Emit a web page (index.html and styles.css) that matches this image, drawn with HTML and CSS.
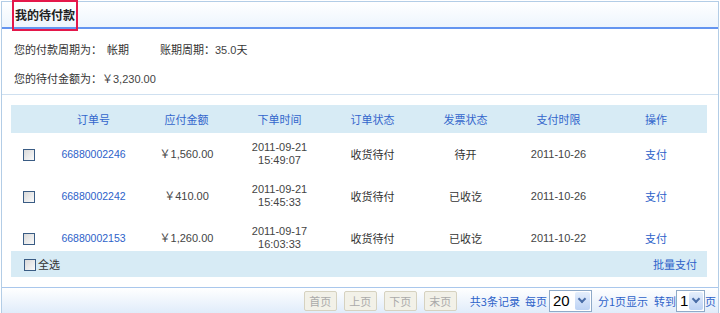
FILE: index.html
```html
<!DOCTYPE html>
<html lang="zh-CN">
<head>
    <meta charset="UTF-8">
    <meta name="viewport" content="width=device-width, initial-scale=1.0">
    <title>我的待付款</title>
    <link rel="stylesheet" href="styles.css">
</head>
<body>

<div class="panel">
    <div class="panel-head">
        <h2 class="panel-title">我的待付款</h2>
        <span class="mark"></span>
    </div>

    <div class="summary">
        <p>您的付款周期为：<span class="val">帐期</span><span class="term">账期周期：<span class="num">35.0</span>天</span></p>
        <p>您的待付金额为：<span class="num">￥3,230.00</span></p>
    </div>

    <div class="orders">
        <table class="order-table">
            <colgroup>
                <col class="c-check">
                <col><col><col><col><col><col>
                <col class="c-op">
            </colgroup>
            <thead>
                <tr>
                    <th></th>
                    <th>订单号</th>
                    <th>应付金额</th>
                    <th>下单时间</th>
                    <th>订单状态</th>
                    <th>发票状态</th>
                    <th>支付时限</th>
                    <th>操作</th>
                </tr>
            </thead>
            <tbody>
                <tr>
                    <td><span class="check"></span></td>
                    <td><a class="order-no" href="#">66880002246</a></td>
                    <td class="num">￥1,560.00</td>
                    <td class="num date">2011-09-21<br>15:49:07</td>
                    <td>收货待付</td>
                    <td>待开</td>
                    <td class="num">2011-10-26</td>
                    <td><a href="#">支付</a></td>
                </tr>
                <tr>
                    <td><span class="check"></span></td>
                    <td><a class="order-no" href="#">66880002242</a></td>
                    <td class="num">￥410.00</td>
                    <td class="num date">2011-09-21<br>15:45:33</td>
                    <td>收货待付</td>
                    <td>已收讫</td>
                    <td class="num">2011-10-26</td>
                    <td><a href="#">支付</a></td>
                </tr>
                <tr>
                    <td><span class="check"></span></td>
                    <td><a class="order-no" href="#">66880002153</a></td>
                    <td class="num">￥1,260.00</td>
                    <td class="num date">2011-09-17<br>16:03:33</td>
                    <td>收货待付</td>
                    <td>已收讫</td>
                    <td class="num">2011-10-22</td>
                    <td><a href="#">支付</a></td>
                </tr>
            </tbody>
            <tfoot>
                <tr>
                    <td colspan="8">
                        <div class="foot-bar">
                            <label class="all"><span class="check"></span>全选</label>
                            <a href="#">批量支付</a>
                        </div>
                    </td>
                </tr>
            </tfoot>
        </table>
    </div>

    <div class="pager">
        <span class="btn">首页</span>
        <span class="btn">上页</span>
        <span class="btn">下页</span>
        <span class="btn">末页</span>
        <span class="pg-text total">共3条记录</span>
        <span class="pg-text per">每页</span>
        <span class="sel sel-size"><span class="sel-val">20</span><span class="sel-arrow"></span></span>
        <span class="pg-text gap">分1页显示</span>
        <span class="pg-text gap">转到</span>
        <span class="sel sel-page"><span class="sel-val">1</span><span class="sel-arrow"></span></span>
        <span class="pg-text">页</span>
    </div>
</div>

</body>
</html>
```

FILE: styles.css
```css
body {
    margin: 0;
    background: #fff;
    color: #333;
    font-family: "Noto Sans CJK SC", sans-serif;
    font-size: 11px;
}
a {
    color: #2d62c9;
    text-decoration: none;
}

.panel {
    position: relative;
    margin: 1px 1px 0 1px;
    border: 1px solid #b3cde6;
    border-bottom-color: #a9c5e6;
}

/* title bar */
.panel-head {
    height: 25px;
    padding-left: 13px;
    background: linear-gradient(#ffffff, #edf5fd);
    border-bottom: 2px solid #6495f0;
}
.panel-title {
    margin: 0;
    font-size: 12px;
    font-weight: bold;
    line-height: 25px;
    color: #222;
}
.mark {
    position: absolute;
    left: 10px;
    top: -2px;
    width: 62px;
    height: 27px;
    border: 2px solid #e4174a;
}

/* summary */
.summary {
    padding: 6px 12px 1px;
    border-bottom: 1px solid #cfe0f0;
}
.summary p {
    margin: 0;
    line-height: 28px;
}
.summary .val {
    margin-left: 5px;
}
.summary .term {
    margin-left: 31px;
}
.num {
    font-family: "Liberation Sans", "Noto Sans CJK SC", sans-serif;
    color: #444;
}

/* orders table */
.orders {
    padding: 10px 10px 10px 9px;
}
.order-table {
    width: 696px;
    border-collapse: collapse;
    table-layout: fixed;
}
.c-check { width: 36px; }
.c-op { width: 102px; }
.order-table th {
    height: 28px;
    padding: 0;
    background: #d7ebf5;
    color: #3366cc;
    font-weight: normal;
    text-align: center;
}
.order-table tbody td {
    padding: 8px 0;
    text-align: center;
    vertical-align: middle;
    line-height: 13px;
    height: 26px;
}
.order-table tbody tr:last-child td {
    padding-bottom: 0;
}
.order-no {
    font-family: "Liberation Sans", sans-serif;
    font-size: 10.5px;
}
.check {
    display: inline-block;
    width: 10px;
    height: 10px;
    border: 1px solid #3a5c84;
    background: linear-gradient(135deg, #d9d9d9, #fafafa);
    vertical-align: middle;
}
.order-table tfoot td {
    height: 26px;
    padding: 0 10px 0 13px;
    background: #d7ebf5;
}
.foot-bar {
    display: flex;
    justify-content: space-between;
    align-items: center;
}
.all {
    display: flex;
    align-items: center;
    gap: 2px;
    color: #333;
}
.all .check {
    margin-top: 1px;
}

/* pager */
.pager {
    display: flex;
    justify-content: flex-end;
    align-items: center;
    height: 25px;
    padding-right: 2px;
    border-top: 1px solid #a9c7ec;
    background: linear-gradient(#ffffff, #e0ecfa);
    color: #2d62c9;
}
.btn {
    width: 31px;
    height: 18px;
    margin-left: 7px;
    line-height: 18px;
    text-align: center;
    border: 1px solid #d6d2c0;
    border-radius: 2px;
    background: #f2f1e8;
    color: #aaa;
}
.total {
    margin-left: 13px;
}
.per {
    margin-left: 5px;
}
.gap {
    margin-left: 6px;
}
.sel {
    display: flex;
    height: 20px;
    margin-left: 2px;
    border: 1px solid #8faac8;
    background: #fff;
}
.sel-size { width: 41px; }
.sel-page { width: 27px; margin-left: 0; }
.sel-val {
    flex: 1;
    padding-left: 3px;
    font-family: "Liberation Sans", sans-serif;
    font-size: 15px;
    line-height: 20px;
    color: #000;
}
.sel-arrow {
    position: relative;
    width: 15px;
    margin: 1px;
    background: linear-gradient(#e4eefc, #bcd2f4);
    border-radius: 2px;
}
.sel-arrow::after {
    content: "";
    position: absolute;
    left: 4px;
    top: 4px;
    width: 4px;
    height: 4px;
    border-right: 2px solid #4a6ea8;
    border-bottom: 2px solid #4a6ea8;
    transform: rotate(45deg);
}
```
